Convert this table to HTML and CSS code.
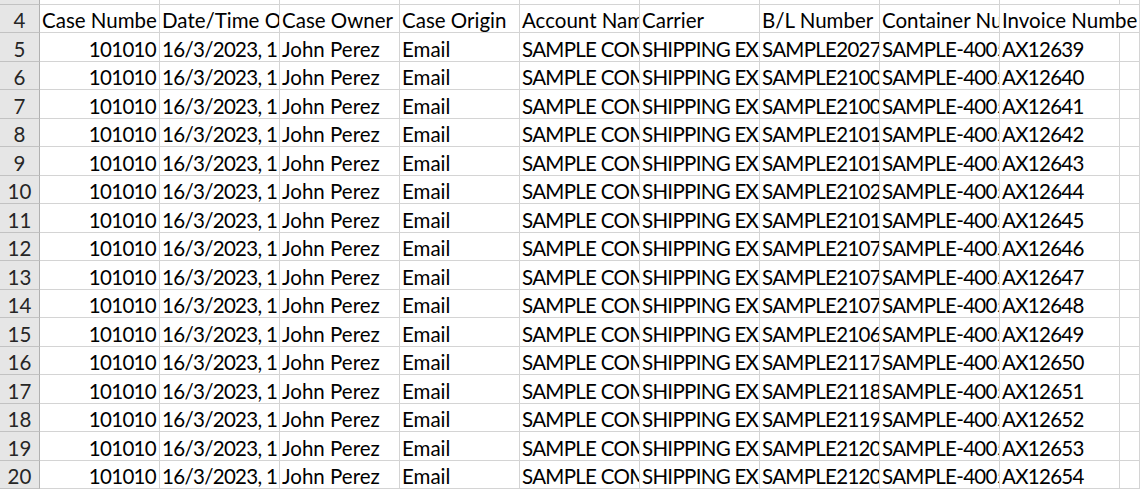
FILE: index.html
```html
<!DOCTYPE html>
<html>
<head>
<meta charset="utf-8">
<link rel="stylesheet" href="styles.css">
</head>
<body>
<div class="sheet">
<div class="rh"></div><div class="c"></div><div class="c"></div><div class="c"></div><div class="c"></div><div class="c"></div><div class="c"></div><div class="c"></div><div class="c"></div><div class="c"></div><div class="c"></div>

<div class="rh">4</div><div class="c">Case Numbe</div><div class="c">Date/Time O</div><div class="c">Case Owner</div><div class="c">Case Origin</div><div class="c">Account Nam</div><div class="c">Carrier</div><div class="c">B/L Number</div><div class="c">Container Nu</div><div class="c span2">Invoice Numbe</div>

<div class="rh">5</div><div class="c num t">101010</div><div class="c t">16/3/2023, 1</div><div class="c">John Perez</div><div class="c">Email</div><div class="c t">SAMPLE COM</div><div class="c t">SHIPPING EXP</div><div class="c t">SAMPLE2027</div><div class="c t">SAMPLE-4005</div><div class="c t">AX12639</div><div class="c"></div>

<div class="rh">6</div><div class="c num t">101010</div><div class="c t">16/3/2023, 1</div><div class="c">John Perez</div><div class="c">Email</div><div class="c t">SAMPLE COM</div><div class="c t">SHIPPING EXP</div><div class="c t">SAMPLE2100</div><div class="c t">SAMPLE-4005</div><div class="c t">AX12640</div><div class="c"></div>

<div class="rh">7</div><div class="c num t">101010</div><div class="c t">16/3/2023, 1</div><div class="c">John Perez</div><div class="c">Email</div><div class="c t">SAMPLE COM</div><div class="c t">SHIPPING EXP</div><div class="c t">SAMPLE2100</div><div class="c t">SAMPLE-4005</div><div class="c t">AX12641</div><div class="c"></div>

<div class="rh">8</div><div class="c num t">101010</div><div class="c t">16/3/2023, 1</div><div class="c">John Perez</div><div class="c">Email</div><div class="c t">SAMPLE COM</div><div class="c t">SHIPPING EXP</div><div class="c t">SAMPLE2101</div><div class="c t">SAMPLE-4005</div><div class="c t">AX12642</div><div class="c"></div>

<div class="rh">9</div><div class="c num t">101010</div><div class="c t">16/3/2023, 1</div><div class="c">John Perez</div><div class="c">Email</div><div class="c t">SAMPLE COM</div><div class="c t">SHIPPING EXP</div><div class="c t">SAMPLE2101</div><div class="c t">SAMPLE-4005</div><div class="c t">AX12643</div><div class="c"></div>

<div class="rh">10</div><div class="c num t">101010</div><div class="c t">16/3/2023, 1</div><div class="c">John Perez</div><div class="c">Email</div><div class="c t">SAMPLE COM</div><div class="c t">SHIPPING EXP</div><div class="c t">SAMPLE2102</div><div class="c t">SAMPLE-4005</div><div class="c t">AX12644</div><div class="c"></div>

<div class="rh">11</div><div class="c num t">101010</div><div class="c t">16/3/2023, 1</div><div class="c">John Perez</div><div class="c">Email</div><div class="c t">SAMPLE COM</div><div class="c t">SHIPPING EXP</div><div class="c t">SAMPLE2101</div><div class="c t">SAMPLE-4005</div><div class="c t">AX12645</div><div class="c"></div>

<div class="rh">12</div><div class="c num t">101010</div><div class="c t">16/3/2023, 1</div><div class="c">John Perez</div><div class="c">Email</div><div class="c t">SAMPLE COM</div><div class="c t">SHIPPING EXP</div><div class="c t">SAMPLE2107</div><div class="c t">SAMPLE-4005</div><div class="c t">AX12646</div><div class="c"></div>

<div class="rh">13</div><div class="c num t">101010</div><div class="c t">16/3/2023, 1</div><div class="c">John Perez</div><div class="c">Email</div><div class="c t">SAMPLE COM</div><div class="c t">SHIPPING EXP</div><div class="c t">SAMPLE2107</div><div class="c t">SAMPLE-4005</div><div class="c t">AX12647</div><div class="c"></div>

<div class="rh">14</div><div class="c num t">101010</div><div class="c t">16/3/2023, 1</div><div class="c">John Perez</div><div class="c">Email</div><div class="c t">SAMPLE COM</div><div class="c t">SHIPPING EXP</div><div class="c t">SAMPLE2107</div><div class="c t">SAMPLE-4005</div><div class="c t">AX12648</div><div class="c"></div>

<div class="rh">15</div><div class="c num t">101010</div><div class="c t">16/3/2023, 1</div><div class="c">John Perez</div><div class="c">Email</div><div class="c t">SAMPLE COM</div><div class="c t">SHIPPING EXP</div><div class="c t">SAMPLE2106</div><div class="c t">SAMPLE-4005</div><div class="c t">AX12649</div><div class="c"></div>

<div class="rh">16</div><div class="c num t">101010</div><div class="c t">16/3/2023, 1</div><div class="c">John Perez</div><div class="c">Email</div><div class="c t">SAMPLE COM</div><div class="c t">SHIPPING EXP</div><div class="c t">SAMPLE2117</div><div class="c t">SAMPLE-4005</div><div class="c t">AX12650</div><div class="c"></div>

<div class="rh">17</div><div class="c num t">101010</div><div class="c t">16/3/2023, 1</div><div class="c">John Perez</div><div class="c">Email</div><div class="c t">SAMPLE COM</div><div class="c t">SHIPPING EXP</div><div class="c t">SAMPLE2118</div><div class="c t">SAMPLE-4005</div><div class="c t">AX12651</div><div class="c"></div>

<div class="rh">18</div><div class="c num t">101010</div><div class="c t">16/3/2023, 1</div><div class="c">John Perez</div><div class="c">Email</div><div class="c t">SAMPLE COM</div><div class="c t">SHIPPING EXP</div><div class="c t">SAMPLE2119</div><div class="c t">SAMPLE-4005</div><div class="c t">AX12652</div><div class="c"></div>

<div class="rh">19</div><div class="c num t">101010</div><div class="c t">16/3/2023, 1</div><div class="c">John Perez</div><div class="c">Email</div><div class="c t">SAMPLE COM</div><div class="c t">SHIPPING EXP</div><div class="c t">SAMPLE2120</div><div class="c t">SAMPLE-4005</div><div class="c t">AX12653</div><div class="c"></div>

<div class="rh">20</div><div class="c num t">101010</div><div class="c t">16/3/2023, 1</div><div class="c">John Perez</div><div class="c">Email</div><div class="c t">SAMPLE COM</div><div class="c t">SHIPPING EXP</div><div class="c t">SAMPLE2120</div><div class="c t">SAMPLE-4005</div><div class="c t">AX12654</div><div class="c"></div>
</div>
</body>
</html>
```

FILE: styles.css
```css
html, body {
  margin: 0;
  padding: 0;
  background: #ffffff;
  overflow: hidden;
}

.sheet {
  display: grid;
  grid-template-columns: 40px repeat(9, 120px) 1fr;
  grid-template-rows: 5px repeat(8, 28px 29px) 28px;
  width: 1140px;
  font-family: "Lato", "Open Sans", sans-serif;
  font-size: 20.5px;
  line-height: 21px;
  color: #000000;
}

.c, .rh {
  box-sizing: border-box;
  border-right: 1px solid #d4d4d4;
  border-bottom: 1px solid #d4d4d4;
  display: flex;
  align-items: flex-end;
  padding: 0 1px 1px 2px;
  white-space: nowrap;
  overflow: hidden;
  min-width: 0;
}

.t {
  letter-spacing: -0.7px;
}

.rh {
  background: #e6e6e6;
  border-right: 1px solid #b1b1b1;
  border-bottom: 1px solid #c2c2c2;
  justify-content: center;
  padding: 0 0 1px 0;
  color: #262626;
}

.num {
  justify-content: flex-end;
  padding-right: 3px;
}

.span2 {
  grid-column: span 2;
}
```
